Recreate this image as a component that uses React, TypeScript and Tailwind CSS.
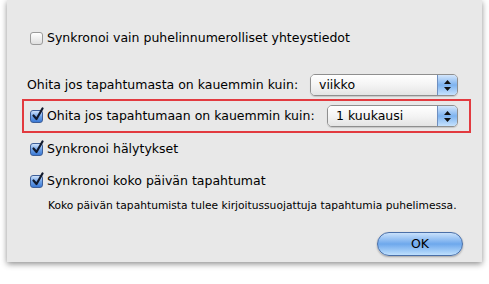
const font = "font-['Lucida_Grande','DejaVu_Sans',sans-serif]";

const CheckBox = ({ checked }: { checked?: boolean }) => (
  <span className="relative inline-block w-[13px] h-[13px] shrink-0">
    <span
      className={
        checked
          ? "absolute inset-0 rounded-[3px] border border-[#3d5f99] bg-gradient-to-b from-[#cfe2fa] via-[#6fa3e8] to-[#3a78d4]"
          : "absolute inset-0 rounded-[3px] border border-[#9a9a9a] bg-gradient-to-b from-white to-[#dedede]"
      }
    />
    {checked && (
      <svg
        className="absolute left-[1px] top-[-3px]"
        width="14"
        height="15"
        viewBox="0 0 14 15"
      >
        <path
          d="M2.5 8.5 L5.5 12 L11.5 1.5"
          fill="none"
          stroke="#111a2e"
          strokeWidth="2.2"
          strokeLinecap="round"
          strokeLinejoin="round"
        />
      </svg>
    )}
  </span>
);

const Popup = ({ value, width }: { value: string; width: string }) => (
  <div
    className={`flex h-[22px] ${width} rounded-[5px] border border-[#8f8f8f] overflow-hidden shadow-[0_1px_1px_rgba(0,0,0,0.15)]`}
  >
    <div className="flex-1 flex items-center pl-[8px] text-[12.5px] text-black bg-gradient-to-b from-white via-[#f4f4f4] to-[#e4e4e4]">
      {value}
    </div>
    <div className="w-[20px] flex flex-col items-center justify-center gap-[3px] border-l border-[#6f8fbf] bg-gradient-to-b from-[#d4e6fb] via-[#7eb3ef] to-[#c6e2fd]">
      <svg width="7" height="4" viewBox="0 0 7 4">
        <path d="M3.5 0 L7 4 L0 4 Z" fill="#111" />
      </svg>
      <svg width="7" height="4" viewBox="0 0 7 4">
        <path d="M0 0 L7 0 L3.5 4 Z" fill="#111" />
      </svg>
    </div>
  </div>
);

export default function App() {
  return (
    <div className={`w-[489px] h-[284px] bg-white ${font}`}>
      <div className="ml-[7px] w-[475px] h-[262px] bg-[#e8e8e8] shadow-[0_2px_6px_rgba(0,0,0,0.45)] flex flex-col pt-[29px]">
        <div className="flex items-center gap-[4px] h-[18px] ml-[23px] text-[12.5px] text-black">
          <CheckBox />
          <span>Synkronoi vain puhelinnumerolliset yhteystiedot</span>
        </div>

        <div className="flex items-center mt-[27px] ml-[20px] h-[22px] text-[12.5px] text-black">
          <span className="w-[283px]">Ohita jos tapahtumasta on kauemmin kuin:</span>
          <Popup value="viikko" width="w-[148px]" />
        </div>

        <div className="mt-[3px] ml-[15px] mr-[11px] h-[34px] border-2 border-[#e23a3f] flex items-center pl-[6px] text-[12.5px] text-black">
          <CheckBox checked />
          <span className="ml-[4px] w-[280px]">Ohita jos tapahtumaan on kauemmin kuin:</span>
          <Popup value="1 kuukausi" width="w-[131px]" />
        </div>

        <div className="flex items-center gap-[4px] h-[18px] mt-[7px] ml-[23px] text-[12.5px] text-black">
          <CheckBox checked />
          <span>Synkronoi hälytykset</span>
        </div>

        <div className="flex items-center gap-[4px] h-[18px] mt-[14px] ml-[23px] text-[12.5px] text-black">
          <CheckBox checked />
          <span>Synkronoi koko päivän tapahtumat</span>
        </div>

        <div className="mt-[9px] ml-[41px] h-[14px] flex items-center text-[10.7px] text-black">
          Koko päivän tapahtumista tulee kirjoitussuojattuja tapahtumia puhelimessa.
        </div>

        <div className="flex justify-end mt-[19px] mr-[19px]">
          <button className="w-[86px] h-[24px] rounded-full border border-[#4a6fa8] bg-gradient-to-b from-[#c9e1fb] via-[#6ea8ec] to-[#bfe0fd] shadow-[0_1px_2px_rgba(0,0,0,0.3)] text-[12.5px] text-black flex items-center justify-center">
            OK
          </button>
        </div>
      </div>
    </div>
  );
}
